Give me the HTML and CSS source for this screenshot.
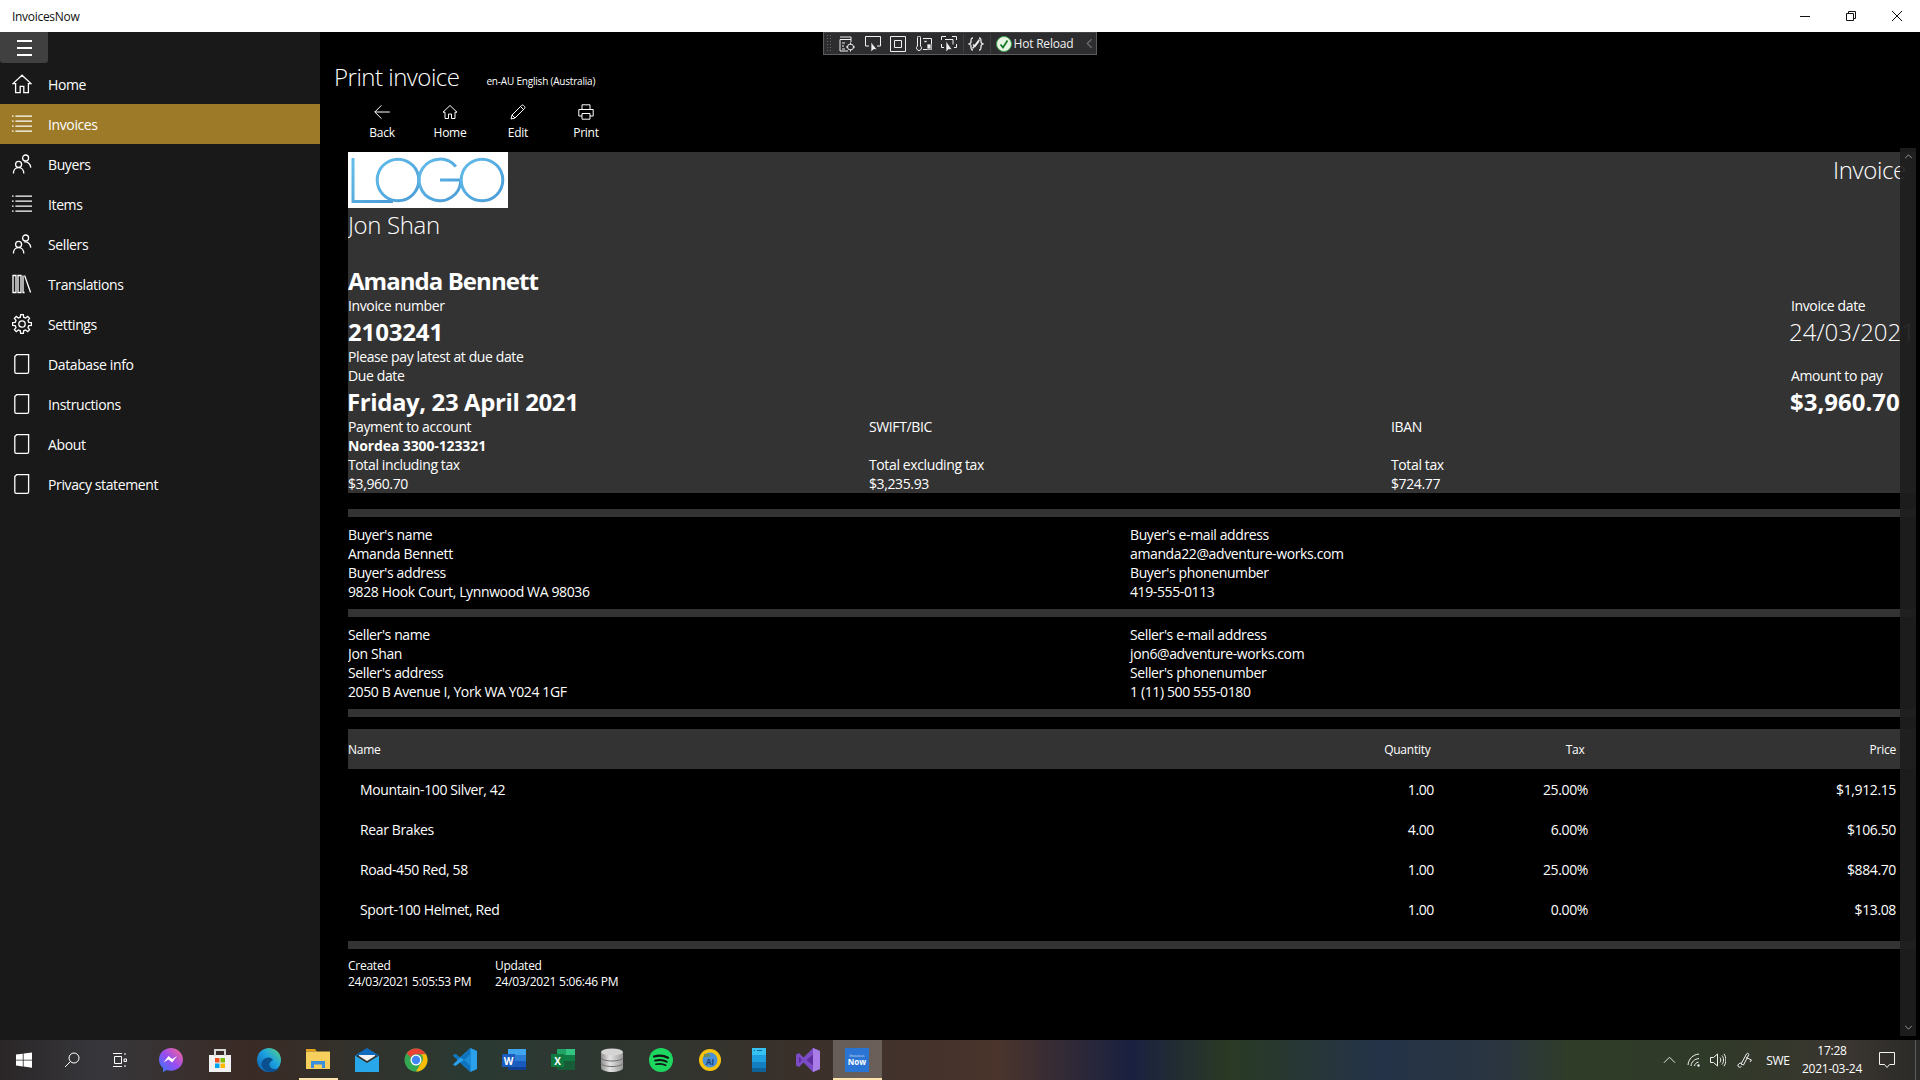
FILE: index.html
```html
<!DOCTYPE html>
<html lang="en">
<head>
<meta charset="utf-8">
<title>InvoicesNow</title>
<link rel="stylesheet" href="styles.css">
</head>
<body>
<svg class="defs" width="0" height="0" aria-hidden="true">
  <defs>
    <symbol id="i-home" viewBox="0 0 20 20"><path d="M10 1.2 1 9.600h2.600v9h4.600v-6.200h3.600v6.200h4.600v-9H19z"/></symbol>
    <symbol id="i-list" viewBox="0 0 20 20"><path d="M0 2.200h1.600M0 7.200h1.600M0 12.200h1.600M0 17.200h1.600M3.400 2.200H20M3.400 7.200H20M3.400 12.200H20M3.400 17.200H20"/></symbol>
    <symbol id="i-people" viewBox="0 0 20 20"><circle cx="13.600" cy="4" r="3"/><circle cx="6.600" cy="10.400" r="3"/><path d="M1.400 19.400c0-3.400 2.200-5.800 5.200-5.800s5.200 2.400 5.200 5.800M12.400 8c3.400-.4 6 1.600 6.400 5.600"/></symbol>
    <symbol id="i-books" viewBox="0 0 20 20"><path d="M1 1.500h3v17H1zM6 1.500h3v17H6zM11 1.500v17h1.600M12.600 1.500 18.600 18.500"/></symbol>
    <symbol id="i-gear" viewBox="0 0 20 20"><polygon points="16.79,8.31 19.41,8.68 19.41,11.32 16.79,11.69 16,13.6 17.59,15.72 15.72,17.59 13.6,16 11.69,16.79 11.32,19.41 8.68,19.41 8.31,16.79 6.4,16 4.28,17.59 2.41,15.72 4,13.6 3.21,11.69 .59,11.32 .59,8.68 3.21,8.31 4,6.4 2.41,4.28 4.28,2.41 6.4,4 8.31,3.21 8.68,.59 11.32,.59 11.69,3.21 13.6,4 15.72,2.41 17.59,4.28 16,6.4"/><circle cx="10" cy="10" r="3.200"/></symbol>
    <symbol id="i-page" viewBox="0 0 20 20"><path d="M4.600.7h12v17.200a1.400 1.400 0 0 1-1.400 1.400H4.200a1.400 1.400 0 0 1-1.400-1.400V2.500z"/></symbol>
  </defs>
</svg>

<header class="titlebar">
  <span class="app-name">InvoicesNow</span>
  <div class="win-controls">
    <svg class="win-btn" viewBox="0 0 46 32"><path d="M18 16.500h10"/></svg>
    <svg class="win-btn" viewBox="0 0 46 32"><path d="M18.500 13.500h7v7h-7zM20.500 13.500v-2h7v7h-2"/></svg>
    <svg class="win-btn" viewBox="0 0 46 32"><path d="M18 11 28 21M28 11 18 21"/></svg>
  </div>
</header>

<div class="app">
  <aside class="sidebar">
    <button class="hamburger" aria-label="Menu"><span></span><span></span><span></span></button>
    <nav class="nav">
      <a class="nav-item"><svg class="nav-icon"><use href="#i-home"/></svg>Home</a>
      <a class="nav-item nav-active"><svg class="nav-icon"><use href="#i-list"/></svg>Invoices</a>
      <a class="nav-item"><svg class="nav-icon"><use href="#i-people"/></svg>Buyers</a>
      <a class="nav-item"><svg class="nav-icon"><use href="#i-list"/></svg>Items</a>
      <a class="nav-item"><svg class="nav-icon"><use href="#i-people"/></svg>Sellers</a>
      <a class="nav-item"><svg class="nav-icon"><use href="#i-books"/></svg>Translations</a>
      <a class="nav-item"><svg class="nav-icon"><use href="#i-gear"/></svg>Settings</a>
      <a class="nav-item"><svg class="nav-icon"><use href="#i-page"/></svg>Database info</a>
      <a class="nav-item"><svg class="nav-icon"><use href="#i-page"/></svg>Instructions</a>
      <a class="nav-item"><svg class="nav-icon"><use href="#i-page"/></svg>About</a>
      <a class="nav-item"><svg class="nav-icon"><use href="#i-page"/></svg>Privacy statement</a>
    </nav>
  </aside>

  <main class="main">
    <div class="vs-toolbar">
      <span class="vs-grip"></span>
      <svg class="vs-icon" viewBox="0 0 16 16"><path d="M1 1h11M1 3.500h11M1 3.500V15h8M12 1v5M3 7h3M3 10h2M3 13h3"/><circle cx="11.500" cy="11" r="3"/><path d="M11.500 6.500v2M11.500 13.500v2M7 11h2M14 11h2"/></svg>
      <svg class="vs-icon" viewBox="0 0 16 16"><path d="M4 10H.5V.5h15V10H12"/><path class="vs-fill" d="M6 6v10l2.500-2.500H12z"/></svg>
      <svg class="vs-icon" viewBox="0 0 16 16"><path d="M.5.500h15v15H.500zM4.500 4.500h7v7h-7z"/></svg>
      <svg class="vs-icon" viewBox="0 0 16 16"><path d="M1.500 10V1.500a1.500 1.500 0 0 1 3 0V10a2.500 2.500 0 1 1-3 0zM7 2.500h8.500v11H7"/><path class="vs-fill" d="M8 4.500h3v2H8zM11 8h4v5h-4z"/></svg>
      <svg class="vs-icon vs-icon-last" viewBox="0 0 16 16"><path d="M.5 4V.5H5M11 .5h4.500V4M.5 8v3.500H3M15.500 8v3.500H13M4 3.500h8v5"/><path class="vs-fill" d="M5 5v11l2.500-2.500H11z"/></svg>
      <span class="vs-sep"></span>
      <svg class="vs-icon vs-icon-narrow" viewBox="0 0 16 16"><path d="M5 2C3 2 3 3 3 5S3 7 1 8c2 1 2 1 2 3s0 3 2 3M11 2c2 0 2 1 2 3s0 2 2 3c-2 1-2 1-2 3s0 3-2 3M4.500 12.500 11.500 3.500M5 8.500l2 2 4-5.500"/></svg>
      <span class="vs-sep"></span>
      <svg class="vs-check" viewBox="0 0 16 16"><circle cx="8" cy="8" r="7.500"/><path d="M4.500 8.500 7 11.500 11.500 4.500"/></svg>
      <span class="vs-label">Hot Reload</span>
      <svg class="vs-chevron" viewBox="0 0 8 12"><path d="M6.500 1 1.500 6l5 5"/></svg>
    </div>

    <div class="page-head">
      <h1 class="page-title">Print invoice</h1>
      <span class="locale">en-AU English (Australia)</span>
    </div>
    <div class="cmdbar">
      <button class="cmd"><svg class="cmd-icon" viewBox="0 0 16 16"><path d="M.8 8h15M7.500 1.300.8 8l6.700 6.700"/></svg>Back</button>
      <button class="cmd"><svg class="cmd-icon" viewBox="0 0 16 16"><path d="M8 1.500 1 8.200h2v6.300h3.500V10h3v4.500H13V8.200h2z"/></svg>Home</button>
      <button class="cmd"><svg class="cmd-icon" viewBox="0 0 16 16"><path d="M1 15l1-4L11.500 1.500a1.400 1.400 0 0 1 2 0l1 1a1.400 1.400 0 0 1 0 2L5 14zM2 11l3 3M10.500 2.500l3 3"/></svg>Edit</button>
      <button class="cmd"><svg class="cmd-icon" viewBox="0 0 16 16"><path d="M4 5.500V.8h8v4.700M4 12H.8V5.500h14.400V12H12M4 9.500h8v5.700H4z"/></svg>Print</button>
    </div>

    <div class="scroller">
      <div class="doc">
        <section class="card">
          <div class="card-head">
            <div class="card-left">
              <svg class="logo" viewBox="0 0 160 56" role="img" aria-label="Logo">
                <defs><linearGradient id="logo-grad" x1="0" y1="0" x2="1" y2="1"><stop offset="0" stop-color="#62bdea"/><stop offset="1" stop-color="#4a9bd6"/></linearGradient></defs>
                <path class="logo-line" d="M5 6v43.500h40"/>
                <circle class="logo-line" cx="50" cy="28" r="20.800"/>
                <path class="logo-line" d="M107.900 14.600A20.800 20.800 0 1 0 112.700 29M92 28h21"/>
                <circle class="logo-line" cx="134" cy="28" r="20.800"/>
              </svg>
              <div class="text-light seller-name">Jon Shan</div>
              <div class="text-big buyer-big">Amanda Bennett</div>
              <div class="line">Invoice number</div>
              <div class="text-big num-big">2103241</div>
              <div class="line">Please pay latest at due date</div>
              <div class="line">Due date</div>
              <div class="text-big due-big">Friday, 23 April 2021</div>
            </div>
            <div class="card-right">
              <div class="text-light invoice-word">Invoice</div>
              <div class="line">Invoice date</div>
              <div class="text-light date-light">24/03/2021</div>
              <div class="line amount-label">Amount to pay</div>
              <div class="text-big amount-big">$3,960.70</div>
            </div>
          </div>
          <div class="pay-grid">
            <div class="line">Payment to account</div><div class="line">SWIFT/BIC</div><div class="line">IBAN</div>
            <div class="line line-bold">Nordea 3300-123321</div><div class="line"></div><div class="line"></div>
            <div class="line">Total including tax</div><div class="line">Total excluding tax</div><div class="line">Total tax</div>
            <div class="line">$3,960.70</div><div class="line">$3,235.93</div><div class="line">$724.77</div>
          </div>
        </section>

        <div class="bar bar-first"></div>
        <section class="party">
          <div>
            <div class="line">Buyer's name</div>
            <div class="line">Amanda Bennett</div>
            <div class="line">Buyer's address</div>
            <div class="line">9828 Hook Court, Lynnwood WA 98036</div>
          </div>
          <div>
            <div class="line">Buyer's e-mail address</div>
            <div class="line">amanda22@adventure-works.com</div>
            <div class="line">Buyer's phonenumber</div>
            <div class="line">419-555-0113</div>
          </div>
        </section>
        <div class="bar"></div>
        <section class="party">
          <div>
            <div class="line">Seller's name</div>
            <div class="line">Jon Shan</div>
            <div class="line">Seller's address</div>
            <div class="line">2050 B Avenue I, York WA Y024 1GF</div>
          </div>
          <div>
            <div class="line">Seller's e-mail address</div>
            <div class="line">jon6@adventure-works.com</div>
            <div class="line">Seller's phonenumber</div>
            <div class="line">1 (11) 500 555-0180</div>
          </div>
        </section>
        <div class="bar"></div>

        <section class="items">
          <div class="row row-head">
            <div class="cell-name-head">Name</div><div class="cell-num-head">Quantity</div><div class="cell-num-head">Tax</div><div class="cell-price">Price</div>
          </div>
          <div class="row"><div class="cell-name">Mountain-100 Silver, 42</div><div class="cell-num">1.00</div><div class="cell-num">25.00%</div><div class="cell-price">$1,912.15</div></div>
          <div class="row"><div class="cell-name">Rear Brakes</div><div class="cell-num">4.00</div><div class="cell-num">6.00%</div><div class="cell-price">$106.50</div></div>
          <div class="row"><div class="cell-name">Road-450 Red, 58</div><div class="cell-num">1.00</div><div class="cell-num">25.00%</div><div class="cell-price">$884.70</div></div>
          <div class="row"><div class="cell-name">Sport-100 Helmet, Red</div><div class="cell-num">1.00</div><div class="cell-num">0.00%</div><div class="cell-price">$13.08</div></div>
        </section>
        <div class="bar"></div>

        <section class="stamps">
          <div><div>Created</div><div>24/03/2021 5:05:53 PM</div></div>
          <div><div>Updated</div><div>24/03/2021 5:06:46 PM</div></div>
        </section>
      </div>
      <div class="scrollbar">
        <svg class="sb-arrow" viewBox="0 0 10 6"><path d="M1 5 5 1l4 4"/></svg>
        <svg class="sb-arrow" viewBox="0 0 10 6"><path d="M1 1l4 4 4-4"/></svg>
      </div>
    </div>
  </main>
</div>

<footer class="taskbar">
  <div class="tb-sys">
    <span class="tb-sysbtn"><svg class="tb-icon-s" viewBox="0 0 16 16"><path class="white" d="M0 2.600 6.800 1.700v6H0zM7.600 1.500 16 .4v7.300H7.600zM0 8.500h6.800v6L0 13.500zM7.600 8.500H16v7.200l-8.400-1.100z"/></svg></span>
    <span class="tb-sysbtn"><svg class="tb-icon-s tb-line" viewBox="0 0 16 16"><circle cx="10" cy="6" r="5"/><path d="M6.500 9.500 1 15"/></svg></span>
    <span class="tb-sysbtn"><svg class="tb-icon-s tb-line" viewBox="0 0 16 16"><path d="M1 1.500h9M1 14.500h9M2.500 4.500h7v7h-7zM13 1v2M13 13v2M12 7h2.500v2.500H12z"/></svg></span>
  </div>
  <div class="tb-apps">
    <span class="tb-app"><svg class="tb-icon" viewBox="0 0 24 24"><defs><linearGradient id="msg" x1="0" y1="1" x2="1" y2="0"><stop offset="0" stop-color="#2f7bff"/><stop offset=".5" stop-color="#9a4cf0"/><stop offset="1" stop-color="#ff6a8a"/></linearGradient></defs><path fill="url(#msg)" d="M12 0C5.200 0 0 5 0 11.500c0 3.500 1.500 6.500 4 8.600V24l3.700-2c1.300.4 2.800.7 4.300.7 6.800 0 12-5 12-11.200S18.800 0 12 0z"/><path class="white" d="m4.500 14.500 5-6.500 3.800 3 4.700-3-4.800 6.400-3.800-2.900z"/></svg></span>
    <span class="tb-app"><svg class="tb-icon" viewBox="0 0 24 24"><path fill="#f1f1f1" d="M1 7h22v17H1z"/><path fill="none" stroke="#d8d8d8" stroke-width="2" d="M7 8V2h10v6"/><path fill="#f25022" d="M7 10h4.500v4.500H7z"/><path fill="#7fba00" d="M12.500 10H17v4.500h-4.500z"/><path fill="#00a4ef" d="M7 15.500h4.500V20H7z"/><path fill="#ffb900" d="M12.500 15.500H17V20h-4.500z"/></svg></span>
    <span class="tb-app"><svg class="tb-icon" viewBox="0 0 24 24"><defs><linearGradient id="edge" x1="0" y1="1" x2="1" y2="0"><stop offset="0" stop-color="#0c59a4"/><stop offset=".55" stop-color="#1ba1e2"/><stop offset="1" stop-color="#5ed47a"/></linearGradient></defs><circle cx="12" cy="12" r="12" fill="url(#edge)"/><path fill="#0b4f8f" d="M12 9.500c-4.500 0-7.500 3-7.500 6.500 0 4 4 8 9 8 4 0 7-1.500 8.500-4-2 1.200-5 1.500-7 .5-2.500-1.200-3.500-4-2-6 1-1.300 2-2 3-2.300-1-1.700-2.500-2.700-4-2.700z"/></svg></span>
    <span class="tb-app tb-running"><svg class="tb-icon" viewBox="0 0 24 24"><path fill="#e3a21a" d="M0 1h9l2 2.500h-11z"/><path fill="#f6cf5c" d="M0 3.500h24V21H0z"/><path fill="#3b8fdc" d="M5 20v-7h14v7h-3v-3.500H8V20z"/></svg></span>
    <span class="tb-app"><svg class="tb-icon" viewBox="0 0 24 24"><path fill="#0f6cbd" d="M12 0 24 7.500H0z"/><path fill="#28a8ea" d="M0 7.500 12 15 24 7.500V24H0z"/><path fill="#f2f2f2" d="M4 7h16v1L12 13 4 8z"/></svg></span>
    <span class="tb-app"><svg class="tb-icon" viewBox="0 0 24 24"><circle cx="12" cy="12" r="11.500" fill="#34a853"/><path fill="#ea4335" d="M12 .5a11.500 11.500 0 0 1 10 5.800H12a5.700 5.700 0 0 0-5.200 3.300L2.700 5.200A11.500 11.500 0 0 1 12 .5z"/><path fill="#fbbc05" d="M22 6.300a11.500 11.500 0 0 1-10 17.200l5-8.500a5.700 5.700 0 0 0 0-8.700z"/><circle cx="12" cy="12" r="5.500" fill="#fff"/><circle cx="12" cy="12" r="4.200" fill="#4285f4"/></svg></span>
    <span class="tb-app"><svg class="tb-icon" viewBox="0 0 24 24"><path fill="#2aa1ea" d="M17.500 0 24 3v18l-6.500 3L7 14.500l-4.500 3.500L0 16.500 4.700 12 0 7.500 2.500 6 7 9.500z"/><path fill="#0e74bd" d="M17.500 0v24L7 14.500 11 12 7 9.500zM0 7.500 2.500 6 7 9.500 4.700 12z"/><path fill="#1c8ed8" d="M17.500 6.500 11 12l6.500 5.500z"/></svg></span>
    <span class="tb-app"><svg class="tb-icon" viewBox="0 0 24 24"><path fill="#41a5ee" d="M6 1h18v6H6z"/><path fill="#2b7cd3" d="M6 7h18v6H6z"/><path fill="#185abd" d="M6 13h18v6H6z"/><path fill="#103f91" d="M6 19h18v3H6z"/><path fill="#1a5dbf" d="M0 6h13v13H0z"/><text class="tb-glyph" x="6.500" y="16.500">W</text></svg></span>
    <span class="tb-app"><svg class="tb-icon" viewBox="0 0 24 24"><path fill="#21a366" d="M6 1h18v6H6z"/><path fill="#107c41" d="M6 7h18v6H6z"/><path fill="#185c37" d="M6 13h18v9H6z"/><path fill="#33c481" d="M15 1h9v6h-9z"/><path fill="#0f7b40" d="M0 6h13v13H0z"/><text class="tb-glyph" x="6.500" y="16.500">X</text></svg></span>
    <span class="tb-app"><svg class="tb-icon" viewBox="0 0 24 24"><defs><linearGradient id="db" x1="0" y1="0" x2="1" y2="0"><stop offset="0" stop-color="#8f8f8f"/><stop offset=".4" stop-color="#e4e4e4"/><stop offset="1" stop-color="#9a9a9a"/></linearGradient></defs><path fill="url(#db)" d="M1 4v16c0 2 5 4 11 4s11-2 11-4V4z"/><ellipse cx="12" cy="4" rx="11" ry="3.500" fill="#d4d4d4"/><path fill="none" stroke="#6e6e6e" d="M1 9.500c0 2 5 3.500 11 3.500s11-1.500 11-3.500M1 15c0 2 5 3.500 11 3.500s11-1.500 11-3.500"/></svg></span>
    <span class="tb-app"><svg class="tb-icon" viewBox="0 0 24 24"><circle cx="12" cy="12" r="12" fill="#1ed760"/><path fill="none" stroke="#121212" stroke-linecap="round" stroke-width="2.200" d="M5 8.500c4.500-1.300 10-1 14 1.200"/><path fill="none" stroke="#121212" stroke-linecap="round" stroke-width="1.900" d="M6 12.600c4-1 8.500-.7 11.800 1.200"/><path fill="none" stroke="#121212" stroke-linecap="round" stroke-width="1.600" d="M7 16.300c3.300-.7 7-.5 9.600 1"/></svg></span>
    <span class="tb-app"><svg class="tb-icon" viewBox="0 0 24 24"><circle cx="12" cy="12" r="11" fill="#f7c20e"/><circle cx="12" cy="12" r="7.500" fill="#4a90d8"/><path fill="#6b8e5a" d="M6 6h6v3H6z"/><text class="tb-glyph tb-glyph-dark" x="12" y="17">AI</text></svg></span>
    <span class="tb-app"><svg class="tb-icon" viewBox="0 0 24 24"><path fill="#35c2f2" d="M5 0h14v7H5z"/><path fill="#1f9fe0" d="M5 7h14v7H5z"/><path fill="#147fc0" d="M5 14h14v6H5z"/><path fill="#0e6298" d="M5 20h14v4H5z"/><path fill="#0e6298" d="M7 2h1v1H7zM10 2h5v1h-5z"/></svg></span>
    <span class="tb-app"><svg class="tb-icon" viewBox="0 0 24 24"><path fill="#7c4cc4" d="M0 6.500 3 5l4.500 4.500L17 0l7 3v18l-7 3-9.500-9.500L3 19l-3-1.500z"/><path fill="#a97de8" d="M17 0l7 3v18l-7 3z"/><path fill="#5c2d9c" d="M17 6.500 10.500 12l6.500 5.500zM3 8.800v6.400L6 12z"/></svg></span>
    <span class="tb-app tb-active"><span class="now-icon"><span class="now-small">Invoices</span><span class="now-big">Now</span></span></span>
  </div>
  <div class="tray">
    <span class="tray-item tray-caret"><svg class="tray-icon" viewBox="0 0 14 8"><path d="M1 7 7 1l6 6"/></svg></span>
    <span class="tray-item tray-wifi"><svg class="tray-icon" viewBox="0 0 14 14"><path d="M1 12c.5-6 5-10.500 11-11M4 13c.3-4 3.500-7 8-7.500M7.500 13c.2-2 1.600-3.500 4-3.800"/><circle class="tray-dot" cx="11.500" cy="12.500" r="1.200"/></svg></span>
    <span class="tray-item tray-vol"><svg class="tray-icon" viewBox="0 0 16 14"><path d="M.5 4.500h3L7.500 1v12l-4-3.500h-3zM10 4.500c1 1.500 1 3.500 0 5M12 2.500c2 2.500 2 6.500 0 9M14 .8c2.500 3.500 2.500 8.900 0 12.400"/></svg></span>
    <span class="tray-item tray-pen"><svg class="tray-icon" viewBox="0 0 16 16"><path d="M4 12 9.500 2c.8-1.400 2.800-.4 2.100 1L6.500 13zM9 5.500 14.500 8 13 10M4.500 11C2 11 .5 12.500 1 14c.5 1.500 2.500 1.500 3.500.5"/></svg></span>
    <span class="tray-item tray-lang">SWE</span>
    <span class="tray-item tray-clock"><span>17:28</span><span>2021-03-24</span></span>
    <span class="tray-item tray-note"><svg class="tray-icon" viewBox="0 0 16 17"><path d="M.5.500h15v12h-5L8 15.500 5.500 12.500h-5z"/></svg></span>
    <span class="tray-show"></span>
  </div>
</footer>
</body>
</html>
```

FILE: styles.css
```css
* { box-sizing: border-box; }
html, body { height: 100%; }
body {
  margin: 0;
  height: 1080px;
  display: flex;
  flex-direction: column;
  overflow: hidden;
  background: #000;
  color: #fff;
  font-family: "Open Sans", "Noto Sans", sans-serif;
  font-size: 14px;
  letter-spacing: -0.38px;
}
.defs { position: absolute; }

/* Title bar */
.titlebar {
  height: 32px;
  flex: none;
  background: #fff;
  color: #111;
  display: flex;
  align-items: center;
  justify-content: space-between;
  padding-left: 12px;
  font-size: 12px;
  letter-spacing: -0.3px;
}
.win-controls { display: flex; }
.win-btn { width: 46px; height: 32px; fill: none; stroke: #111; stroke-width: 1; }

/* Shell */
.app { flex: 1; display: flex; min-height: 0; }
.sidebar { width: 320px; flex: none; background: #191919; }
.hamburger {
  width: 48px;
  height: 31px;
  margin: 0 0 1px;
  padding: 0;
  border: 0;
  border-radius: 0 0 3px 3px;
  background: #404040;
  display: flex;
  flex-direction: column;
  align-items: center;
  justify-content: center;
  gap: 5px;
}
.hamburger span { display: block; width: 15px; height: 2px; background: #fff; }
.nav-item {
  height: 40px;
  display: flex;
  align-items: center;
  gap: 16px;
  padding-left: 12px;
}
.nav-active { background: #9c7a28; }
.nav-icon { width: 20px; height: 20px; fill: none; stroke: #fff; stroke-width: 1.3; }

.main { flex: 1; min-width: 0; display: flex; flex-direction: column; position: relative; background: #000; }

/* VS in-app toolbar */
.vs-toolbar {
  position: absolute;
  left: 503px;
  top: 0;
  width: 274px;
  height: 23px;
  background: #2d2d30;
  border: 1px solid #5c5c5c;
  border-top-color: #444;
  display: flex;
  align-items: center;
  padding-left: 2px;
  font-size: 12px;
  letter-spacing: -0.2px;
}
.vs-grip {
  width: 7px;
  height: 19px;
  margin-right: 6px;
  background-image: radial-gradient(#666 40%, transparent 45%);
  background-size: 3px 3px;
}
.vs-icon { width: 16px; height: 16px; margin-right: 9.500px; fill: none; stroke: #f0f0f0; stroke-width: 1; flex: none; }
.vs-icon-last { margin-left: -.5px; margin-right: 8.500px; }
.vs-icon-narrow { margin-left: -1px; margin-right: 8.500px; stroke-width: 1.300; }
.vs-fill { fill: #f0f0f0; stroke: #2d2d30; stroke-width: .7; }
.vs-sep { width: 1px; height: 19px; background: #3f3f42; margin: 0 5px 0 -2.500px; flex: none; }
.vs-check { width: 16px; height: 16px; flex: none; margin-right: 2px; fill: #e8f5e4; stroke: #3fa34a; stroke-width: 1; }
.vs-check path { fill: none; stroke: #157a25; stroke-width: 1.800; }
.vs-label { color: #f0f0f0; white-space: nowrap; width: 72px; }
.vs-chevron { width: 7px; height: 11px; fill: none; stroke: #6f6f6f; stroke-width: 1.500; }

/* Page header */
.page-head {
  height: 68px;
  flex: none;
  padding: 22px 0 0 14px;
  display: flex;
  align-items: center;
  gap: 27px;
}
.page-title { margin: 0; font-size: 24px; font-weight: 300; line-height: 32px; letter-spacing: -0.5px; }
.locale { font-size: 10px; letter-spacing: -0.2px; position: relative; top: 4px; }
.cmdbar { height: 48px; flex: none; display: flex; padding-left: 28px; }
.cmd {
  width: 68px;
  height: 48px;
  padding: 4px 0 0;
  border: 0;
  background: none;
  color: #fff;
  font: inherit;
  font-size: 12px;
  letter-spacing: -0.25px;
  display: flex;
  flex-direction: column;
  align-items: center;
  gap: 4px;
}
.cmd-icon { width: 16px; height: 16px; fill: none; stroke: #fff; stroke-width: 1; }

/* Document */
.scroller { flex: 1; min-height: 0; position: relative; overflow: hidden; }
.doc { margin-left: 28px; margin-right: 4px; padding-top: 4px; overflow: hidden; height: 100%; }
.card { background: #333; height: 341px; overflow: hidden; }
.card-head { display: grid; grid-template-columns: 1443px 1fr; }
.logo { display: block; width: 160px; height: 56px; background: #fff; }
.logo-line { fill: none; stroke: url(#logo-grad); stroke-width: 3; }
.line { height: 19px; line-height: 18px; white-space: nowrap; }
.line-bold { font-weight: 700; letter-spacing: -0.12px; }
.text-light { height: 32px; line-height: 32px; font-size: 24px; font-weight: 300; white-space: nowrap; letter-spacing: -0.35px; }
.text-big { height: 32px; line-height: 32px; font-size: 24px; font-weight: 700; white-space: nowrap; letter-spacing: -0.45px; }
.seller-name { margin-top: 1px; }
.buyer-big { margin-top: 24px; letter-spacing: -0.95px; }
.num-big { letter-spacing: -0.15px; }
.due-big { margin-left: -1px; letter-spacing: -0.4px; }
.amount-big { margin-left: -1px; letter-spacing: 0; }
.date-light { margin-left: -2px; letter-spacing: 0; }
.invoice-word { padding-left: 42px; margin-top: 2px; margin-bottom: 111px; }
.amount-label { margin-top: 19px; }
.pay-grid { display: grid; grid-template-columns: 521px 522px 1fr; }
.bar { height: 8px; background: #333; }
.bar-first { margin-top: 16px; }
.party { display: grid; grid-template-columns: 782px 1fr; padding: 9px 0 7px; }

.items { padding: 12px 0; }
.row { display: grid; grid-template-columns: 1000px 86px 154px 308px; height: 40px; align-items: center; white-space: nowrap; }
.row-head { background: #333; font-size: 12px; letter-spacing: -0.25px; }
.cell-name { padding-left: 12px; }
.cell-num { text-align: right; }
.cell-num-head { text-align: right; padding-right: 3.500px; }
.cell-price { text-align: right; }
.stamps { display: flex; gap: 24px; padding-top: 9px; font-size: 12px; letter-spacing: -0.25px; line-height: 16px; white-space: nowrap; }
.stamps > div:first-child { width: 123px; }

/* Scrollbar overlays the content */
.scrollbar {
  position: absolute;
  left: 1580px;
  top: 0;
  bottom: 4px;
  width: 16px;
  background: rgba(30, 30, 30, .93);
  display: flex;
  flex-direction: column;
  justify-content: space-between;
  align-items: center;
  padding: 6px 0;
}
.sb-arrow { width: 9px; height: 5px; fill: none; stroke: #b0b0b0; stroke-width: 1; }

/* Taskbar */
.taskbar {
  height: 40px;
  flex: none;
  display: flex;
  align-items: center;
  font-size: 12px;
  letter-spacing: -0.25px;
  background: linear-gradient(90deg, #2a2628 0, #37373b 100px, #3a2a25 250px, #2a3a33 470px, #303630 640px, #3a302a 800px, #4a342c 1000px, #1a2040 1130px, #2a3a24 1230px, #243348 1380px, #2a3540 1500px, #2f3d28 1570px, #2f3a28 1700px, #3a3530 1850px, #2a2a28 1920px);
}
.tb-sys { display: flex; }
.tb-sysbtn { width: 48px; height: 40px; display: flex; align-items: center; justify-content: center; }
.tb-icon-s { width: 16px; height: 16px; }
.white { fill: #fff; }
.tb-line { fill: none; stroke: #fff; stroke-width: 1; }
.tb-apps { display: flex; margin-left: 2.500px; }
.tb-app { width: 49px; height: 40px; display: flex; align-items: center; justify-content: center; position: relative; }
.tb-icon { width: 24px; height: 24px; }
.tb-glyph { fill: #fff; font-size: 10px; font-weight: 700; text-anchor: middle; letter-spacing: 0; }
.tb-glyph-dark { fill: #1a3f6f; font-size: 8px; }
.tb-running::after { content: ""; position: absolute; left: 5px; right: 5px; bottom: 0; height: 2px; background: #ffe3ad; }
.tb-active { background: rgba(255, 255, 255, .22); }
.tb-active::after { content: ""; position: absolute; left: 0; right: 0; bottom: 0; height: 2px; background: #ffe3ad; }
.now-icon { width: 24px; height: 24px; background: #2a74d4; display: flex; flex-direction: column; align-items: center; justify-content: center; line-height: 1; letter-spacing: 0; }
.now-small { font-size: 4px; opacity: .8; }
.now-big { font-size: 8px; font-weight: 700; }

.tray { margin-left: auto; display: flex; align-items: center; height: 40px; }
.tray-item { height: 40px; display: flex; align-items: center; justify-content: center; flex: none; }
.tray-caret { width: 24px; }
.tray-wifi { width: 25px; }
.tray-vol { width: 23px; }
.tray-pen { width: 32px; }
.tray-lang { width: 34px; }
.tray-clock { width: 74px; flex-direction: column; gap: 2px; line-height: 16px; }
.tray-note { width: 36px; }
.tray-icon { fill: none; stroke: #f2f2f2; stroke-width: 1; }
.tray-dot { fill: #f2f2f2; stroke: none; }
.tray-caret .tray-icon { width: 13px; height: 8px; }
.tray-wifi .tray-icon { width: 14px; height: 14px; }
.tray-vol .tray-icon { width: 16px; height: 14px; }
.tray-pen .tray-icon { width: 16px; height: 16px; }
.tray-note .tray-icon { width: 16px; height: 17px; }
.tray-show { width: 1px; height: 40px; background: #5d5d5a; margin: 0 4px 0 10px; }
```
